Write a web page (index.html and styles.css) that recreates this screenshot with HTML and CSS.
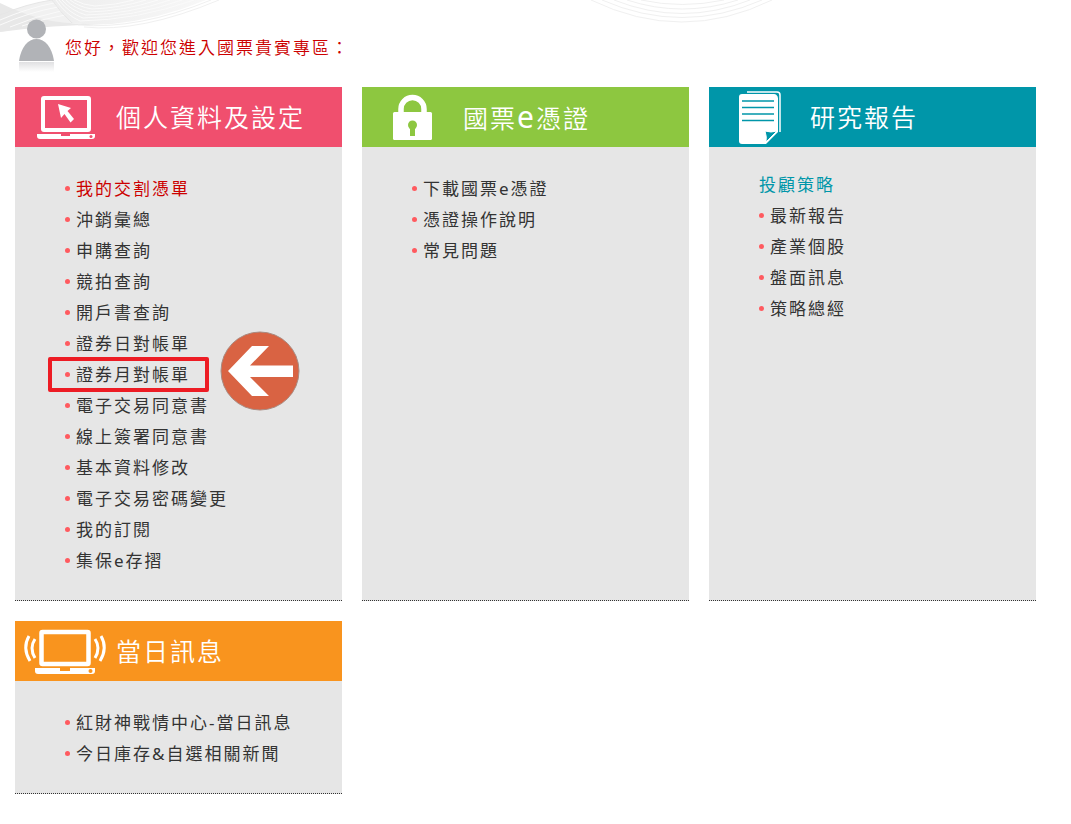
FILE: index.html
```html
<!DOCTYPE html>
<html lang="zh-Hant">
<head>
  <meta charset="UTF-8">
  <title>國票貴賓專區</title>
  <meta name="viewport" content="width=device-width, initial-scale=1.0">
  <link rel="stylesheet" href="styles.css">
</head>
<body>
  <svg class="bg-wave" width="1071" height="40" viewBox="0 0 1071 40" aria-hidden="true">
    <defs>
      <linearGradient id="waveFade" x1="0" x2="1">
        <stop offset="0" stop-color="#e6e6e6"/>
        <stop offset="1" stop-color="#f4f4f4"/>
      </linearGradient>
    </defs>
    <path d="M0 15 Q26 4 52 0 Q58 10 72 23 Q34 26 0 32Z" fill="#f1f1f1"/>
    <path d="M0 3 Q26 16 52 21 Q80 25 112 24 Q50 25 0 32Z" fill="#e8e8e8"/>
    <path d="M52 0 H206 Q160 19 112 24 Q88 25 72 23 Q60 12 52 0Z" fill="url(#waveFade)" opacity="0.7"/>
    <g fill="none" stroke="#fafafa">
      <path d="M56 0 Q66 15 80 21 Q138 20 194 0"/>
      <path d="M59 0 Q69 13 83 18 Q134 17 182 0"/>
      <path d="M62 0 Q72 11 86 15 Q130 14 170 0"/>
      <path d="M66 0 Q75 9 89 12 Q124 11 158 0"/>
      <path d="M70 0 Q79 7 92 9 Q120 8 146 0"/>
      <path d="M74 0 Q83 5 95 6 Q116 5 134 0"/>
      <path d="M0 20 Q28 8 54 3"/>
      <path d="M0 25 Q30 12 58 7"/>
      <path d="M10 27 Q36 16 61 11"/>
      <path d="M22 26 Q42 19 65 15"/>
    </g>
    <g fill="none" stroke="#e6e6e6">
      <path d="M52 0 Q60 12 72 23"/>
      <path d="M0 15 Q26 4 52 0"/>
    </g>
    <g fill="none" stroke="#f0f0f0">
      <path d="M78 25 Q138 30 211 0"/>
      <path d="M84 27 Q140 33 219 0"/>
      <path d="M591 0 Q682 44 772 0"/>
      <path d="M602 0 Q682 35 762 0"/>
      <path d="M614 0 Q682 27 750 0"/>
      <path d="M627 0 Q682 18 738 0"/>
      <path d="M641 0 Q682 9 724 0"/>
    </g>
  </svg>

  <header class="welcome">
    <svg class="user-icon" width="36" height="52" viewBox="0 0 36 52" aria-hidden="true">
      <defs>
        <linearGradient id="shadow" x1="0" y1="0" x2="0" y2="1">
          <stop offset="0" stop-color="#e0e0e2"/>
          <stop offset="1" stop-color="#ffffff"/>
        </linearGradient>
      </defs>
      <circle cx="17.500" cy="9" r="9.500" fill="#b1b3b7"/>
      <path d="M0 41 C2 27 9 19 17.500 19 C26 19 33 27 35 41Z" fill="#b1b3b7"/>
      <rect x="0" y="42" width="35" height="10" fill="url(#shadow)"/>
    </svg>
    <p>您好，歡迎您進入國票貴賓專區：</p>
  </header>

  <main class="cards">
    <section class="card">
      <div class="card-head pink">
        <svg class="icon" width="98" height="60" viewBox="0 0 98 60" aria-hidden="true">
          <rect x="28" y="11" width="46" height="32" rx="1" fill="none" stroke="#fff" stroke-width="4"/>
          <path d="M22 47H80V49Q80 52 77 52H25Q22 52 22 49Z" fill="#fff"/>
          <path d="M46 47h9v2h-9z" fill="#f04f6e"/>
          <circle cx="76" cy="49.500" r="1.500" fill="#f04f6e"/>
          <path d="M43 17L56 21L52.500 24L59 32L55.500 35.500L49.500 27L46 31Z" fill="#fff"/>
        </svg>
        <h2>個人資料及設定</h2>
      </div>
      <ul class="links">
        <li><a class="hot" href="#">我的交割憑單</a></li>
        <li><a href="#">沖銷彙總</a></li>
        <li><a href="#">申購查詢</a></li>
        <li><a href="#">競拍查詢</a></li>
        <li><a href="#">開戶書查詢</a></li>
        <li><a href="#">證券日對帳單</a></li>
        <li class="marked">
          <a href="#">證券月對帳單</a>
          <svg class="arrow" width="80" height="80" viewBox="0 0 80 80" aria-hidden="true">
            <circle cx="40" cy="40" r="39" fill="#d96343" stroke="#a98a80" stroke-width="1"/>
            <path d="M8 40L32 15H49L30 34.500H73V46H30L49 65H32Z" fill="#fff"/>
          </svg>
        </li>
        <li><a href="#">電子交易同意書</a></li>
        <li><a href="#">線上簽署同意書</a></li>
        <li><a href="#">基本資料修改</a></li>
        <li><a href="#">電子交易密碼變更</a></li>
        <li><a href="#">我的訂閱</a></li>
        <li><a href="#">集保e存摺</a></li>
      </ul>
    </section>

    <section class="card">
      <div class="card-head green">
        <svg class="icon" width="98" height="60" viewBox="0 0 98 60" aria-hidden="true">
          <path d="M39 26V22a11.500 11.500 0 0 1 23 0V26" fill="none" stroke="#fff" stroke-width="5.500"/>
          <rect x="31" y="25" width="39" height="28" rx="1.500" fill="#fff"/>
          <circle cx="50.500" cy="38" r="4.500" fill="#8dc740"/>
          <path d="M48 39h5v10h-5z" fill="#8dc740"/>
        </svg>
        <h2>國票<span class="big">e</span>憑證</h2>
      </div>
      <ul class="links">
        <li><a href="#">下載國票e憑證</a></li>
        <li><a href="#">憑證操作說明</a></li>
        <li><a href="#">常見問題</a></li>
      </ul>
    </section>

    <section class="card">
      <div class="card-head teal">
        <svg class="icon" width="98" height="60" viewBox="0 0 98 60" aria-hidden="true">
          <path d="M38 5H68Q71 5 71 8V45" fill="none" stroke="#fff" stroke-width="1.500"/>
          <path d="M33 7H65Q68 7 69 11V45L57 57H33Q30 57 30 54V10Q30 7 33 7Z" fill="#fff"/>
          <path d="M33 14H65M33 20.500H65M33 27H65M33 33.500H65" stroke="#0096a9" stroke-width="1.500"/>
          <path d="M57 55Q58 50 56 44Q62 46 68 44Z" fill="#0096a9" stroke="#fff" stroke-width="1"/>
        </svg>
        <h2>研究報告</h2>
      </div>
      <div class="report">
        <h3>投顧策略</h3>
        <ul class="links">
          <li><a href="#">最新報告</a></li>
          <li><a href="#">產業個股</a></li>
          <li><a href="#">盤面訊息</a></li>
          <li><a href="#">策略總經</a></li>
        </ul>
      </div>
    </section>

    <section class="card">
      <div class="card-head orange">
        <svg class="icon" width="98" height="60" viewBox="0 0 98 60" aria-hidden="true">
          <rect x="26.500" y="11" width="47" height="32" rx="1" fill="none" stroke="#fff" stroke-width="4.500"/>
          <path d="M20 47H80V50Q80 53 77 53H23Q20 53 20 50Z" fill="#fff"/>
          <path d="M45 47h10v3h-10z" fill="#f9941e"/>
          <circle cx="75.500" cy="50" r="2" fill="#f9941e"/>
          <path d="M14 15Q7 27 15 40M20 18Q14 27 20 37M80 18Q86 27 80 37M86 15Q93 27 85 40" fill="none" stroke="#fff" stroke-width="3"/>
        </svg>
        <h2>當日訊息</h2>
      </div>
      <ul class="links">
        <li><a href="#">紅財神戰情中心-當日訊息</a></li>
        <li><a href="#">今日庫存&amp;自選相關新聞</a></li>
      </ul>
    </section>
  </main>
</body>
</html>
```
FILE: styles.css
```css
*, *::before, *::after {
  box-sizing: border-box;
}
body {
  margin: 0;
  padding: 20px 35px 30px 15px;
  font-family: "Noto Sans", "Noto Sans CJK TC", sans-serif;
  font-size: 17px;
  line-height: 31px;
  letter-spacing: 2px;
  color: #333;
  background: #fff;
}
h2, h3, p, ul {
  margin: 0;
  padding: 0;
}
a {
  color: inherit;
  text-decoration: none;
}
a:hover {
  text-decoration: underline;
}
.bg-wave {
  position: absolute;
  top: 0;
  left: 0;
  z-index: -1;
  max-width: 100%;
}
.welcome {
  display: flex;
  align-items: flex-start;
  gap: 10px;
  padding-left: 4px;
  margin-bottom: 15px;
  color: #c00;
  font-weight: 350;
}
.welcome p {
  padding-top: 12px;
}
.user-icon {
  flex: none;
  overflow: visible;
}
.cards {
  display: grid;
  grid-template-columns: repeat(3, 1fr);
  gap: 20px;
}
.card {
  background: #e6e6e6;
  border-bottom: 1px dotted #333;
}
.card-head {
  display: flex;
  align-items: center;
  gap: 3px;
  height: 60px;
  color: #fff;
}
.card-head h2 {
  font-size: 25px;
  font-weight: 350;
  white-space: nowrap;
}
.icon {
  flex: none;
}
.card-head .big {
  font-size: 30px;
  font-weight: 400;
}
.pink {
  background: #f04f6e;
}
.green {
  background: #8dc740;
}
.teal {
  background: #0096a9;
}
.orange {
  background: #f9941e;
}
.links {
  list-style: none;
  padding: 26px 0 24px 50px;
}
.links li {
  display: flex;
  align-items: center;
  gap: 6px;
  position: relative;
  height: 31px;
}
.links li::before {
  content: "";
  width: 5px;
  height: 5px;
  border-radius: 50%;
  background: #ff5a5f;
}
.hot {
  color: #c00;
}
.report {
  padding-top: 22px;
}
.report h3 {
  padding-left: 50px;
  font-size: 17px;
  font-weight: 400;
  color: #0096a9;
}
.report .links {
  padding-top: 0;
}
/* red frame and arrow over the monthly statement link */
.marked::after {
  content: "";
  position: absolute;
  top: -2px;
  left: -17px;
  width: 161px;
  height: 35px;
  border: 4px solid #ed1c24;
  border-radius: 2px;
}
.arrow {
  position: absolute;
  top: -28px;
  left: 155px;
}
@media (max-width: 768px) {
  .cards {
    grid-template-columns: 1fr;
  }
}
```
